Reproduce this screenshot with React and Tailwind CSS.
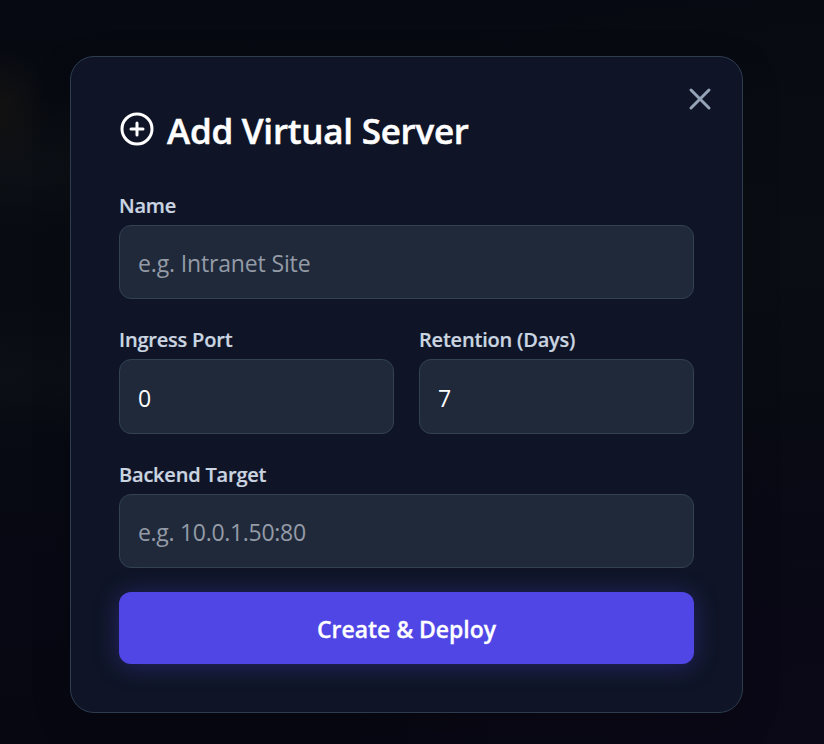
import { CirclePlus, X } from "lucide-react";

const inputClass =
  "block w-full rounded-xl border border-[#334155] bg-[#1f293a] px-[18px] pt-[2px] text-[23px] text-white placeholder:text-[#949ba7] outline-none";

const Field = ({ label, height, spacing = "tracking-[-0.3px]", ...props }) => (
  <div>
    <label className="block h-[32px] pt-px text-[20px] leading-[24px] font-semibold tracking-[-0.2px] text-[#cbd5e1] [-webkit-text-stroke:0.2px]">
      {label}
    </label>
    <input className={`${inputClass} ${height} ${spacing}`} {...props} />
  </div>
);

const App = () => {
  return (
    <div className="flex h-[744px] w-[824px] items-start overflow-hidden bg-[#06080f] bg-[radial-gradient(50px_60px_at_0px_108px,#131211,#13121100),radial-gradient(260px_70px_at_0px_165px,#0d1015,#0d101500),radial-gradient(260px_80px_at_0px_375px,#0c0f15,#0c0f1500),radial-gradient(500px_300px_at_824px_250px,#0a0d13,#0a0d1300),radial-gradient(500px_400px_at_824px_744px,#0b0817,#0b081700),linear-gradient(#070912,#080b11_35%,#070913_60%,#070712)] pt-[56px] pl-[70px] font-['Open_Sans','Noto_Sans',sans-serif]">
      <div className="relative h-[657px] w-[673px] rounded-3xl border border-[#2e3c50] bg-[#0f1526] px-12 shadow-[0_12px_40px_rgba(0,0,0,0.15)]">
        <button className="absolute top-[24px] right-[24px] text-[#94a3b8]">
          <X size={36} strokeWidth={2} />
        </button>

        <h2 className="flex h-[136px] items-start gap-[12px] pt-[54px] text-[35px] leading-[40px] font-semibold text-white">
          <CirclePlus size={36} strokeWidth={2} />
          <span className="tracking-[-0.25px] [-webkit-text-stroke:0.5px]">Add Virtual Server</span>
        </h2>

        <form className="flex flex-col gap-[28px]" onSubmit={(e) => e.preventDefault()}>
          <Field
            label="Name"
            height="h-[74px]"
            spacing="tracking-[-0.15px]"
            placeholder="e.g. Intranet Site"
          />
          <div className="grid grid-cols-2 gap-[25px]">
            <Field label="Ingress Port" height="h-[75px]" defaultValue="0" />
            <Field label="Retention (Days)" height="h-[75px]" defaultValue="7" />
          </div>
          <Field label="Backend Target" height="h-[74px]" placeholder="e.g. 10.0.1.50:80" />
          <button className="-mt-1 h-[72px] rounded-xl bg-[#4f46e5] pt-[2px] text-[23px] font-semibold tracking-[-0.05px] text-white shadow-[0_2px_24px_rgba(79,70,229,0.35)] [-webkit-text-stroke:0.3px]">
            Create &amp; Deploy
          </button>
        </form>
      </div>
    </div>
  );
};

export default App;
